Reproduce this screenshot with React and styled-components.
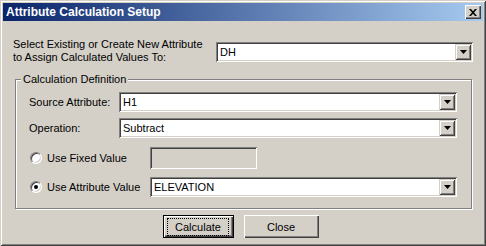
import React from "react";
import styled, { createGlobalStyle } from "styled-components";

const Global = createGlobalStyle`
html, body {
  margin: 0;
  padding: 0;
  background: #d4d0c8;
}
body {
  font-family: "Liberation Sans", Arial, sans-serif;
  font-size: 11px;
  color: #000;
}
`;

const Window = styled.div`
width: 486px;
height: 246px;
box-sizing: border-box;
padding: 3px;
background: #d4d0c8;
box-shadow: inset 1px 1px #d4d0c8, inset -1px -1px #404040,
  inset 2px 2px #fff, inset -2px -2px #808080;
display: flex;
flex-direction: column;
`;

const TitleBar = styled.div`
height: 18px;
display: flex;
align-items: center;
justify-content: space-between;
padding: 0 2px 0 3px;
background: linear-gradient(to right, #0a246a, #a6caf0);
`;

const Title = styled.span`
color: #fff;
font-weight: bold;
font-size: 12px;
`;

const CloseBox = styled.div`
width: 16px;
height: 14px;
box-sizing: border-box;
background: #d4d0c8;
box-shadow: inset 1px 1px #fff, inset -1px -1px #404040,
  inset -2px -2px #808080;
display: flex;
align-items: center;
justify-content: center;
`;

const Body = styled.div`
padding: 16px 10px 0 10px;
display: flex;
flex-direction: column;
`;

const TopRow = styled.div`
display: flex;
justify-content: space-between;
align-items: flex-start;
`;

const TopLabel = styled.div`
line-height: 13px;
white-space: nowrap;
padding-top: 1px;
`;

const Sunken = styled.div`
height: ${(p) => p.h || 20}px;
width: ${(p) => p.w}px;
flex: none;
margin-top: ${(p) => p.mt || 0}px;
box-sizing: border-box;
background: ${(p) => (p.disabled ? "#d4d0c8" : "#fff")};
box-shadow: inset 1px 1px #808080, inset -1px -1px #fff,
  inset 2px 2px #404040, inset -2px -2px #d4d0c8;
display: flex;
align-items: center;
padding: 2px;
`;

const ComboText = styled.span`
flex: 1;
padding-left: 2px;
line-height: 14px;
`;

const DropButton = styled.div`
width: 16px;
height: 100%;
box-sizing: border-box;
background: #d4d0c8;
box-shadow: inset 1px 1px #d4d0c8, inset -1px -1px #404040,
  inset 2px 2px #fff, inset -2px -2px #808080;
display: flex;
align-items: center;
justify-content: center;
`;

const Group = styled.div`
position: relative;
margin: 15px 0 0 2px;
width: 457px;
height: 130px;
box-sizing: border-box;
border: 1px solid #808080;
box-shadow: inset 1px 1px #fff, 1px 1px #fff;
padding: 12px 14px 0 13px;
display: flex;
flex-direction: column;
`;

const Legend = styled.span`
position: absolute;
top: -8px;
left: 5px;
padding: 0 2px;
background: #d4d0c8;
line-height: 14px;
`;

const Row = styled.div`
display: flex;
align-items: center;
margin-top: ${(p) => p.mt || 0}px;
`;

const Label = styled.div`
width: ${(p) => p.w}px;
flex: none;
display: flex;
align-items: center;
white-space: nowrap;
`;

const Radio = styled.span`
width: 12px;
height: 12px;
flex: none;
box-sizing: border-box;
border-radius: 50%;
margin: 0 5px 0 1px;
background: #fff;
border: 1px solid;
border-color: #808080 #fff #fff #808080;
box-shadow: inset 1px 1px #404040, inset -1px -1px #d4d0c8;
display: flex;
align-items: center;
justify-content: center;
&::after {
  content: "";
  width: 4px;
  height: 4px;
  border-radius: 50%;
  background: ${(p) => (p.checked ? "#000" : "transparent")};
}
`;

const ButtonRow = styled.div`
display: flex;
justify-content: center;
gap: 10px;
margin-top: 6px;
padding-right: 5px;
`;

const Button = styled.div`
width: ${(p) => p.w}px;
height: 23px;
box-sizing: border-box;
background: #d4d0c8;
display: flex;
align-items: center;
justify-content: center;
box-shadow: ${(p) =>
  p.primary
    ? "inset 1px 1px #000, inset -1px -1px #000, inset 2px 2px #fff, inset -2px -2px #404040, inset -3px -3px #808080"
    : "inset 1px 1px #fff, inset -1px -1px #404040, inset -2px -2px #808080"};
`;

const Focus = styled.span`
padding: 1px 7px;
border: 1px dotted #000;
line-height: 14px;
`;

const Arrow = () => (
  <svg width="7" height="4" viewBox="0 0 7 4">
    <path d="M0 0h7L3.5 4z" fill="#000" />
  </svg>
);

const Combo = ({ w, value, mt }) => (
  <Sunken w={w} mt={mt}>
    <ComboText>{value}</ComboText>
    <DropButton>
      <Arrow />
    </DropButton>
  </Sunken>
);

export default function App() {
  return (
    <>
      <Global />
      <Window>
        <TitleBar>
          <Title>Attribute Calculation Setup</Title>
          <CloseBox>
            <svg width="8" height="7" viewBox="0 0 8 7">
              <path d="M0 0h2l2 2.2L6 0h2L5 3.5 8 7H6L4 4.8 2 7H0l3-3.5z" fill="#000" />
            </svg>
          </CloseBox>
        </TitleBar>
        <Body>
          <TopRow>
            <TopLabel>
              Select Existing or Create New Attribute
              <br />
              to Assign Calculated Values To:
            </TopLabel>
            <Combo w={257} mt={5} value="DH" />
          </TopRow>
          <Group>
            <Legend>Calculation Definition</Legend>
            <Row>
              <Label w={90}>Source Attribute:</Label>
              <Combo w={338} value="H1" />
            </Row>
            <Row mt={6}>
              <Label w={90}>Operation:</Label>
              <Combo w={338} value="Subtract" />
            </Row>
            <Row mt={9}>
              <Label w={121}>
                <Radio />
                Use Fixed Value
              </Label>
              <Sunken w={107} h={22} disabled />
            </Row>
            <Row mt={8}>
              <Label w={121}>
                <Radio checked />
                Use Attribute Value
              </Label>
              <Combo w={307} value="ELEVATION" />
            </Row>
          </Group>
          <ButtonRow>
            <Button w={71} primary>
              <Focus>Calculate</Focus>
            </Button>
            <Button w={75}>Close</Button>
          </ButtonRow>
        </Body>
      </Window>
    </>
  );
}
